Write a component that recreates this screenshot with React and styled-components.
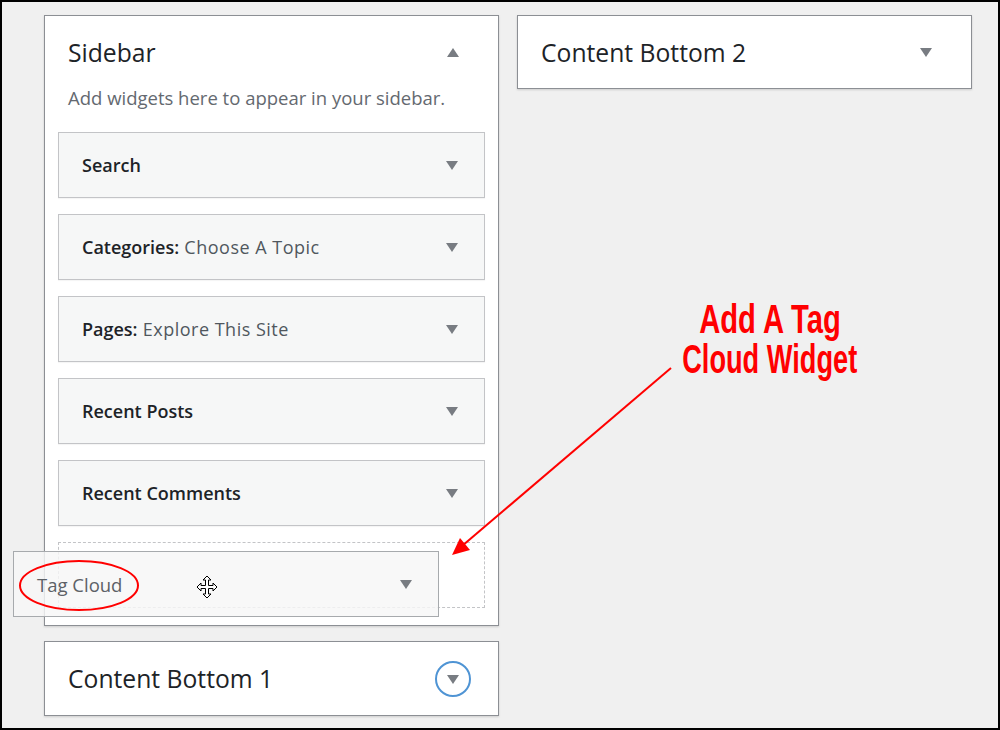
import React from 'react';
import styled, { createGlobalStyle } from 'styled-components';

const Global = createGlobalStyle`
  html, body { margin: 0; padding: 0; }
  body {
    background: #f0f0f0;
    font-family: "Open Sans", "Noto Sans", sans-serif;
    color: #1d2327;
  }
`;

const Frame = styled.div`
  position: relative;
  box-sizing: border-box;
  width: 1000px;
  height: 730px;
  border: 2px solid #000;
  overflow: hidden;
  padding: 13px 0 0 42px;
  display: grid;
  grid-template-columns: 455px 455px;
  column-gap: 18px;
  align-items: start;
`;

const Column = styled.div`
  display: flex;
  flex-direction: column;
  gap: 15px;
`;

const Panel = styled.section`
  background: #fff;
  border: 1px solid #8c8f94;
  box-shadow: 0 1px 2px rgba(0, 0, 0, 0.15);
  padding: ${p => (p.$open ? '0 13px 17px' : '0')};
`;

const PanelHead = styled.div`
  display: flex;
  align-items: center;
  justify-content: space-between;
  height: ${p => p.$h}px;
  padding: 0 ${p => p.$pr}px 0 ${p => p.$pl}px;
`;

const PanelTitle = styled.h2`
  margin: 0;
  font-size: 24.7px;
  font-weight: 400;
  color: #1d2327;
`;

const Description = styled.p`
  margin: -2px 0 22px 10px;
  font-size: 18.5px;
  line-height: 24px;
  color: #646970;
`;

const WidgetList = styled.div`
  display: flex;
  flex-direction: column;
  gap: 16px;
`;

const Widget = styled.div`
  box-sizing: border-box;
  height: 66px;
  display: flex;
  align-items: center;
  justify-content: space-between;
  padding: 0 26px 0 23px;
  background: #f6f7f7;
  border: 1px solid #c3c4c7;
  box-shadow: 0 1px 1px rgba(0, 0, 0, 0.04);
  font-size: 18px;
  font-weight: 600;
  color: #1d2327;
`;

const Subtitle = styled.span`
  font-weight: 400;
  color: #50575e;
  letter-spacing: 0.5px;
`;

const Placeholder = styled.div`
  box-sizing: border-box;
  height: 66px;
  border: 1px dashed #c3c4c7;
`;

const Triangle = styled.span`
  width: 0;
  height: 0;
  border-left: 6px solid transparent;
  border-right: 6px solid transparent;
  ${p => (p.$up ? 'border-bottom: 9px solid #787c82;' : 'border-top: 9px solid #787c82;')}
`;

const CircleToggle = styled.span`
  box-sizing: border-box;
  width: 36px;
  height: 36px;
  border-radius: 50%;
  border: 2px solid #4f94d4;
  display: flex;
  align-items: center;
  justify-content: center;
  padding-top: 2px;
`;

const Dragged = styled.div`
  position: absolute;
  left: 11px;
  top: 549px;
  width: 426px;
  height: 66px;
  box-sizing: border-box;
  display: flex;
  align-items: center;
  justify-content: space-between;
  padding: 0 26px 0 23px;
  background: rgba(246, 247, 247, 0.82);
  border: 1px solid #a7aaad;
  font-size: 18.5px;
  font-weight: 500;
  color: #5d6166;
`;

const Overlay = styled.svg`
  position: absolute;
  left: -2px;
  top: -2px;
  pointer-events: none;
`;

const Annotation = styled.div`
  position: absolute;
  left: 636px;
  top: 297px;
  width: 264px;
  display: flex;
  flex-direction: column;
  align-items: center;
  font-family: "Liberation Sans", sans-serif;
  font-weight: 700;
  font-size: 40px;
  line-height: 40px;
  color: #ff0000;
`;

const AnnotationLine = styled.span`
  display: block;
  white-space: nowrap;
  transform: scaleX(${p => p.$scale});
`;

const Cursor = styled.svg`
  position: absolute;
  left: 194px;
  top: 573px;
`;

const widgets = [
  { title: 'Search' },
  { title: 'Categories:', sub: 'Choose A Topic' },
  { title: 'Pages:', sub: 'Explore This Site' },
  { title: 'Recent Posts' },
  { title: 'Recent Comments' },
];

export default function App() {
  return (
    <>
      <Global />
      <Frame>
        <Column>
          <Panel $open>
            <PanelHead $h={72} $pl={10} $pr={26}>
              <PanelTitle>Sidebar</PanelTitle>
              <Triangle $up />
            </PanelHead>
            <Description>Add widgets here to appear in your sidebar.</Description>
            <WidgetList>
              {widgets.map(w => (
                <Widget key={w.title}>
                  <span>
                    {w.title}
                    {w.sub && <Subtitle> {w.sub}</Subtitle>}
                  </span>
                  <Triangle />
                </Widget>
              ))}
              <Placeholder />
            </WidgetList>
          </Panel>
          <Panel>
            <PanelHead $h={73} $pl={23} $pr={27}>
              <PanelTitle>Content Bottom 1</PanelTitle>
              <CircleToggle><Triangle /></CircleToggle>
            </PanelHead>
          </Panel>
        </Column>
        <Column>
          <Panel>
            <PanelHead $h={72} $pl={23} $pr={39}>
              <PanelTitle>Content Bottom 2</PanelTitle>
              <Triangle />
            </PanelHead>
          </Panel>
        </Column>

        <Dragged>
          <span>Tag Cloud</span>
          <Triangle />
        </Dragged>

        <Cursor width="22" height="24" viewBox="0 0 22 24">
          <path
            d="M11 1 L15 5 L12.5 5 L12.5 10.5 L17 10.5 L17 8 L21 12 L17 16 L17 13.5 L12.5 13.5 L12.5 19 L15 19 L11 23 L7 19 L9.5 19 L9.5 13.5 L5 13.5 L5 16 L1 12 L5 8 L5 10.5 L9.5 10.5 L9.5 5 L7 5 Z"
            fill="#fff"
            stroke="#000"
            strokeWidth="1"
          />
        </Cursor>

        <Overlay width="1000" height="730" viewBox="0 0 1000 730">
          <ellipse cx="79" cy="585.5" rx="59" ry="24.5" fill="none" stroke="#ff0000" strokeWidth="2" />
          <line x1="671" y1="368" x2="462" y2="546" stroke="#ff0000" strokeWidth="2" />
          <polygon points="452,555 460,538 470,550" fill="#ff0000" />
        </Overlay>

        <Annotation>
          <AnnotationLine $scale={0.73}>Add A Tag</AnnotationLine>
          <AnnotationLine $scale={0.68}>Cloud Widget</AnnotationLine>
        </Annotation>
      </Frame>
    </>
  );
}
